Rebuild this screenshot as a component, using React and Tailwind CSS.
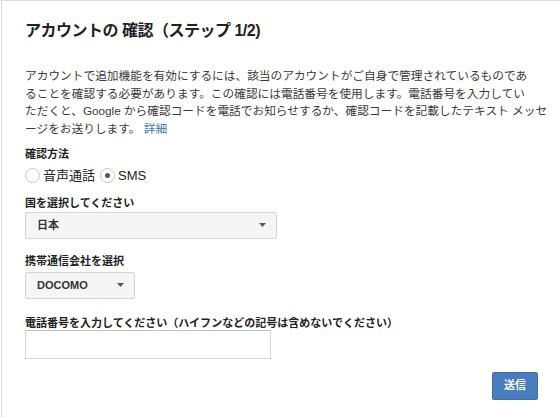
import React, { useState } from 'react';

const jp = { fontFamily: '"Liberation Sans", "Noto Sans CJK JP", sans-serif' };

const Arrow = () => (
  <svg width="7" height="4" viewBox="0 0 7 4" className="shrink-0">
    <path d="M0 0h7L3.5 4z" fill="#555" />
  </svg>
);

const Radio = ({ checked, label, onClick }) => (
  <label className="flex items-center cursor-pointer" onClick={onClick}>
    <span className="w-[15px] h-[15px] rounded-full border border-[#c6c6c6] bg-white flex items-center justify-center shrink-0">
      {checked && <span className="w-[5px] h-[5px] rounded-full bg-[#555]" />}
    </span>
    <span className="ml-[3px] text-[13px] text-[#222]">{label}</span>
  </label>
);

const App = () => {
  const [method, setMethod] = useState('sms');

  return (
    <div className="w-[560px] h-[417px] bg-white overflow-hidden" style={jp}>
      <div className="h-full border-t border-l border-[#dcdcdc] ml-px pl-[23px] pr-[22px] pt-[20px]">
        <h1 className="text-[16px] font-bold text-[#222] leading-[20px] tracking-[-0.5px]">
          アカウントの 確認（ステップ 1/2)
        </h1>

        <div className="mt-[26px] text-[11.7px] leading-[17.5px] text-[#3a3a3a]">
          <div className="whitespace-nowrap">アカウントで追加機能を有効にするには、該当のアカウントがご自身で管理されているものであ</div>
          <div className="whitespace-nowrap">ることを確認する必要があります。この確認には電話番号を使用します。電話番号を入力してい</div>
          <div className="whitespace-nowrap">ただくと、Google から確認コードを電話でお知らせするか、確認コードを記載したテキスト メッセ</div>
          <div className="whitespace-nowrap">
            ージをお送りします。 <a href="#" className="text-[#3a78b6]">詳細</a>
          </div>
        </div>

        <div className="mt-[10px] text-[11px] font-bold text-[#222] leading-[14px]">確認方法</div>
        <div className="mt-[5px] flex items-center gap-[5px]">
          <Radio checked={method === 'voice'} label="音声通話" onClick={() => setMethod('voice')} />
          <Radio checked={method === 'sms'} label="SMS" onClick={() => setMethod('sms')} />
        </div>

        <div className="mt-[10px] text-[11px] font-bold text-[#222] leading-[14px]">国を選択してください</div>
        <div className="mt-[2px] w-[252px] h-[27px] border border-[#d5d5d5] rounded-[2px] bg-[#f5f5f5] flex items-center justify-between pl-[11px] pr-[10px]">
          <span className="text-[11px] font-bold text-[#333]">日本</span>
          <Arrow />
        </div>

        <div className="mt-[15px] text-[11px] font-bold text-[#222] leading-[14px]">携帯通信会社を選択</div>
        <div className="mt-[4px] w-[110px] h-[27px] border border-[#d5d5d5] rounded-[2px] bg-[#f5f5f5] flex items-center justify-between pl-[11px] pr-[10px]">
          <span className="text-[11px] font-bold text-[#333]">DOCOMO</span>
          <Arrow />
        </div>

        <div className="mt-[17px] text-[11px] font-bold text-[#222] leading-[14px]">電話番号を入力してください（ハイフンなどの記号は含めないでください）</div>
        <input
          type="text"
          className="mt-0 block w-[246px] h-[29px] border border-[#d9d9d9] border-t-[#c0c0c0] bg-white outline-none px-2 text-[13px]"
        />

        <div className="mt-[13px] flex justify-end">
          <button className="w-[46px] h-[28px] rounded-[2px] bg-[#4a7cc0] border border-[#3b6cae] text-white text-[11px] font-bold">
            送信
          </button>
        </div>
      </div>
    </div>
  );
};

export default App;
